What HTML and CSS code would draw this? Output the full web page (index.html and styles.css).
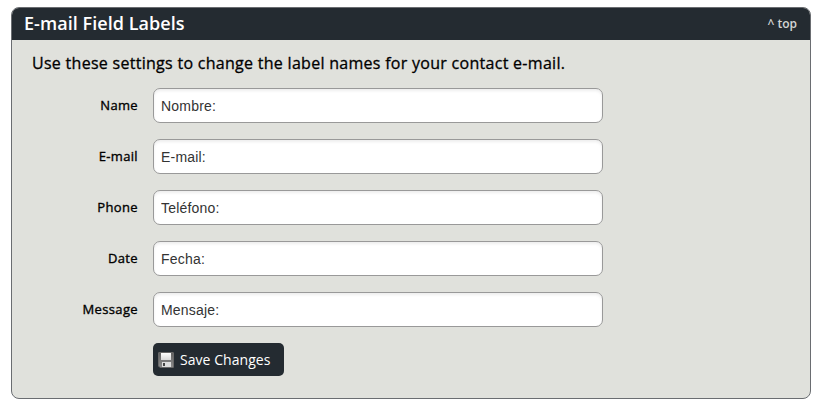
FILE: index.html
```html
<!DOCTYPE html>
<html lang="en">
<head>
<meta charset="utf-8">
<title>E-mail Field Labels</title>
<link rel="stylesheet" href="styles.css">
</head>
<body>
<section class="panel">
  <header class="panel-head"><h2>E-mail Field Labels</h2><a class="top" href="#">^ top</a></header>
  <form class="panel-body">
    <p class="intro">Use these settings to change the label names for your contact e-mail.</p>
    <div class="row"><label for="name">Name</label><input id="name" type="text" value="Nombre:"></div>
    <div class="row"><label for="email">E-mail</label><input id="email" type="text" value="E-mail:"></div>
    <div class="row"><label for="phone">Phone</label><input id="phone" type="text" value="Teléfono:"></div>
    <div class="row"><label for="date">Date</label><input id="date" type="text" value="Fecha:"></div>
    <div class="row"><label for="message">Message</label><input id="message" type="text" value="Mensaje:"></div>
    <button class="save" type="button">
      <svg class="icon" viewBox="0 0 16 16" width="16" height="16">
        <defs>
          <linearGradient id="body" x1="0" y1="0" x2="0" y2="1"><stop offset="0" stop-color="#606060"/><stop offset="1" stop-color="#8c8c8c"/></linearGradient>
          <linearGradient id="paper" x1="0" y1="0" x2="0" y2="1"><stop offset="0" stop-color="#fff"/><stop offset="1" stop-color="#d8d8d8"/></linearGradient>
        </defs>
        <path d="M1 .5h14q.5 0 .5.5v14q0 .5-.5.5H2L.5 14V1Q.5.5 1 .5z" fill="url(#body)" stroke="#686868"/>
        <path d="M3 1h10v7H3z" fill="url(#paper)"/>
        <path d="M4 10h9v5H4z" fill="#ddd"/>
        <path d="M5 11h2v3H5z" fill="#444"/>
      </svg>
      <span>Save Changes</span>
    </button>
  </form>
</section>
</body>
</html>
```
FILE: styles.css
```css
* { box-sizing: border-box; }
body { margin: 0; background: #fff; font-family: "Open Sans", sans-serif; color: #000; }
.panel { margin: 7px 8px 0 11px; height: 392px; border: 1px solid #6a6d71; border-radius: 8px; background: #e0e1dc; overflow: hidden; }
.panel-head { height: 32px; padding: 0 13px 2px 12px; display: flex; align-items: center; justify-content: space-between; background: #242b31; color: #fff; }
h2 { margin: 0; font-size: 18px; font-weight: 600; line-height: 30px; letter-spacing: .05px; }
.top { color: #d4d6d4; font-size: 12px; font-weight: 600; text-decoration: none; }
.panel-body { padding: 12px 21px 12px 20px; }
.intro { margin: 0 0 14px; font-size: 16px; line-height: 22px; font-weight: 400; letter-spacing: .285px; -webkit-text-stroke: .3px #000; }
.row { display: flex; align-items: center; gap: 15px; margin-bottom: 16px; }
label { width: 106px; text-align: right; font-size: 13px; font-weight: 400; letter-spacing: .35px; -webkit-text-stroke: .35px #000; position: relative; top: -1px; }
input { width: 450px; height: 35px; padding: 1px 7px 0; border: 1px solid #999; border-radius: 7px; background: #fff; box-shadow: inset 0 2px 3px #eee; color: #333; font: 14px "Liberation Sans", sans-serif; letter-spacing: .2px; }
.save { display: flex; align-items: center; gap: 6px; width: 131px; height: 33px; margin-left: 121px; padding: 0 5px; border: 0; border-radius: 5px; background: #242b31; color: #fff; font: 14px "Open Sans", sans-serif; letter-spacing: .05px; white-space: nowrap; }
```
